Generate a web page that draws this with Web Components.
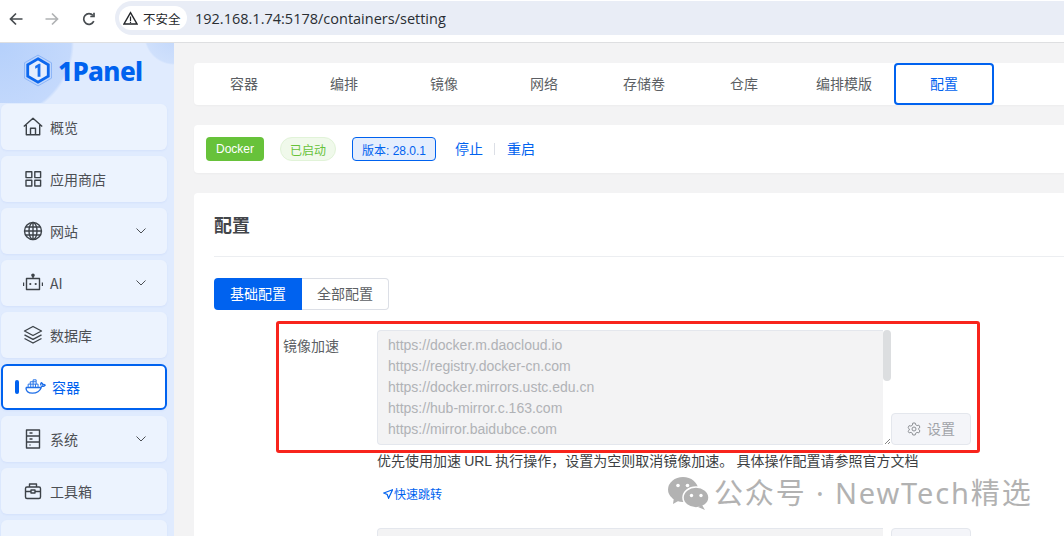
<!DOCTYPE html>
<html lang="zh-CN"><head><meta charset="utf-8"><title>1Panel</title>
<style>
html,body{margin:0;height:536px;overflow:hidden;background:#f3f3f4}
body{font:14px "Liberation Sans","Noto Sans CJK SC",sans-serif;position:relative;display:flex;flex-direction:column}
.layout{display:flex;flex:1;min-height:0}
</style></head><body>
<browser-bar url="192.168.1.74:5178/containers/setting"></browser-bar>
<div class="layout">
<app-sidebar>
  <nav-item label="概览"><svg viewBox="0 0 20 20"><path d="M.8 9.500 10 1.300l9.200 8.200M3.300 8v9.700h13.400V8M7.500 17.700v-6.500h5v6.500"/></svg></nav-item>
  <nav-item label="应用商店"><svg viewBox="0 0 20 20"><rect x="3" y="2.800" width="5.800" height="5.800"/><rect x="11.800" y="2.800" width="5.800" height="5.800"/><rect x="3" y="11.200" width="5.800" height="5.800"/><rect x="11.800" y="11.200" width="5.800" height="5.800"/></svg></nav-item>
  <nav-item label="网站" chevron><svg viewBox="0 0 20 20"><circle cx="10" cy="10" r="8.500"/><ellipse cx="10" cy="10" rx="4" ry="8.500"/><path d="M10 1.500v17M1.500 10h17M2.800 6h14.400M2.800 14h14.400"/></svg></nav-item>
  <nav-item label="AI" chevron><svg viewBox="0 0 20 20"><rect x="3.500" y="5.500" width="13" height="11"/><path d="M10 5.500V3M.5 9.500v3.500M19.500 9.500v3.500"/><circle cx="10" cy="2.300" r="1.100" fill="#3c4248"/><circle cx="7.300" cy="11" r="1.100" fill="#3c4248" stroke="none"/><circle cx="12.700" cy="11" r="1.100" fill="#3c4248" stroke="none"/></svg></nav-item>
  <nav-item label="数据库"><svg viewBox="0 0 20 20"><path d="M10 1.500 18.500 6 10 10.500 1.500 6zM1.500 9.800 10 14.300l8.500-4.500M1.500 13.500 10 18l8.500-4.500"/></svg></nav-item>
  <nav-item label="容器" active><svg viewBox="0 0 22 20" style="stroke:#1f6fe8"><path d="M1 10.500h15c1 0 1.700-.9 1.900-1.700.9.500 2.500.4 3.300-.7-.7-.8-1.800-1-2.600-.7-.2-1-.8-1.600-1.500-2-.7.900-.8 2-.3 2.800M1 10.500c0 3.800 2.700 6 6.800 6 4.500 0 7.800-2.300 9.300-6"/><path d="M3.300 10V7h10.400v3M5.500 7V4.500h6.200V7M8.500 4.500V2.500h3.200v2M8.500 7v3M11 7v3M6 7v3M8.500 4.500V7" stroke-width="1"/></svg></nav-item>
  <nav-item label="系统" chevron><svg viewBox="0 0 20 20"><rect x="3.500" y="1" width="13" height="18"/><path d="M3.500 7h13M3.500 13h13M6.500 4h3M6.500 10h3M6.500 16h1"/></svg></nav-item>
  <nav-item label="工具箱"><svg viewBox="0 0 20 20"><rect x="2.500" y="6" width="15" height="11.500" rx="1.500"/><path d="M6.500 6V3h7v3M2.500 10.500h15"/><rect x="8" y="9" width="4" height="3" fill="#ecf3fe"/></svg></nav-item>
  <nav-item></nav-item>
</app-sidebar>
<main-area>
  <tab-bar>
    <tab-item>容器</tab-item><tab-item>编排</tab-item><tab-item>镜像</tab-item><tab-item>网络</tab-item><tab-item>存储卷</tab-item><tab-item>仓库</tab-item><tab-item>编排模版</tab-item><tab-item active>配置</tab-item>
  </tab-bar>
  <status-card></status-card>
  <config-card>
    <mirror-field label="镜像加速">
      <div>https://docker.m.daocloud.io</div>
      <div>https://registry.docker-cn.com</div>
      <div>https://docker.mirrors.ustc.edu.cn</div>
      <div>https://hub-mirror.c.163.com</div>
      <div>https://mirror.baidubce.com</div>
    </mirror-field>
  </config-card>
</main-area>
</div>
<highlight-box></highlight-box>
<water-mark>公众号 · NewTech精选</water-mark>
<script>
function def(name, html){
  customElements.define(name, class extends HTMLElement{
    connectedCallback(){
      if(this.shadowRoot) return;
      const r=this.attachShadow({mode:'open'});
      r.innerHTML=typeof html==='function'?html(this):html;
    }
  });
}
def('browser-bar', el=>`<style>
:host{display:flex;align-items:center;height:42px;flex:none;background:#fff;border-bottom:1px solid #dedfe1}
.nav{display:flex;width:115px;flex:none;margin-top:-5px;align-items:center}
.nav svg{width:14px;height:14px;fill:none;stroke:#474c50;stroke-width:1.700;flex:none}
.pill{flex:1;height:34px;margin-top:-6px;background:#e9edf6;border-radius:17px 0 0 17px;display:flex;align-items:center;padding-left:4px}
.chip{display:flex;align-items:center;gap:5px;height:24px;width:68px;box-sizing:border-box;background:#fff;border-radius:12px;padding-left:4px;font-size:12.500px;color:#24272b;font-family:"Noto Sans CJK SC",sans-serif;white-space:nowrap}
.chip svg{width:15px;height:15px;flex:none}
.url{margin-left:8px;font:14.500px "Open Sans",sans-serif;color:#2a2e33;white-space:nowrap}
</style>
<div class="nav">
<svg viewBox="0 0 14 14" style="margin-left:9px"><path d="M13.500 7H1.500M7 1.500 1.500 7 7 12.500"/></svg>
<svg viewBox="0 0 14 14" style="margin-left:22px;stroke:#b0b2b4"><path d="M.5 7h12M7 1.500 12.500 7 7 12.500"/></svg>
<svg viewBox="0 0 14 14" style="margin-left:23px"><path d="M11.800 9.200A5.300 5.300 0 1 1 11 3.500"/><path d="M12 .8v3.700H8.300"/></svg>
</div>
<div class="pill"><span class="chip"><svg viewBox="0 0 15 15"><path d="M7.500 1.700 14 13H1z" fill="none" stroke="#24272b" stroke-width="1.400"/><path d="M7.500 5.500V10M7.500 10.700v1.300" stroke="#24272b" stroke-width="1.200"/></svg>不安全</span><span class="url">${el.getAttribute('url')}</span></div>`);

def('app-sidebar', `<style>
:host{display:flex;flex-direction:column;width:174px;flex:none;overflow:hidden;box-sizing:border-box;padding:0 7px 0 1px;
background:
 radial-gradient(circle 76px at -2px 0px,#b5d0fb 0,#c4d9fc 96%,transparent 100%) 0 0/100% 60px no-repeat,
 radial-gradient(circle 30px at 174px -8px,#c2d7fb 0,#cfe0fc 94%,transparent 100%) 0 0/100% 60px no-repeat,
 #e0ebfe}
.logo{display:flex;align-items:center;height:61px;box-sizing:border-box;padding:0 0 6px 23px;flex:none;gap:6px;font:800 26px "Noto Sans",sans-serif;color:#0062ef;letter-spacing:-.6px}
.logo svg{width:28px;height:33px;flex:none}
.list{display:flex;flex-direction:column;gap:6px}
</style><div class="logo"><svg viewBox="0 0 30 34"><path d="M15 .5 29.500 8.800v16.400L15 33.500.5 25.200V8.800z" fill="none" stroke="#7aa9f5" stroke-width=".8"/><path d="M15 4.500 26 10.800v12.400L15 29.500 4 23.200V10.800z" fill="#e6eefd" stroke="#0d68ee" stroke-width="3"/><path d="M12 12.300 16 9.800h1.600v14h-3V13.800l-2.600 1.300z" fill="#1a70ee"/></svg><span>1Panel</span></div><div class="list"><slot></slot></div>`);

def('nav-item', el=>{
 const active=el.hasAttribute('active'), label=el.getAttribute('label')||'', chev=el.hasAttribute('chevron');
 return `<style>
:host{display:flex;align-items:center;height:46px;flex:none;box-sizing:border-box;border-radius:6px;background:${active?'#fff':'#ecf3fe'};${active?'border:2px solid #0062ef;':''}padding-left:${active?'12px':'22px'};color:${active?'#0062ef':'#4c4f54'};font-family:"Noto Sans CJK SC",sans-serif;font-size:14px;box-shadow:0 1px 2px rgba(120,160,230,.12)}
.bar{width:3.500px;height:14px;border-radius:2px;background:#0062ef;margin-right:6.500px;flex:none}
.ico{width:${active?'21px':'20px'};height:20px;flex:none;margin-right:${active?'6px':'7px'};display:flex}
::slotted(svg){width:100%;height:100%;fill:none;stroke:#3c4248;stroke-width:1.400;stroke-linejoin:round}
.t{flex:1}
.ch{width:10px;height:6px;margin-right:21px;fill:none;stroke:#4c4f54;stroke-width:1}
</style>${active?'<span class="bar"></span>':''}<span class="ico"><slot></slot></span><span class="t">${label}</span>${chev?'<svg class="ch" viewBox="0 0 10 6"><path d="M.5.5 5 5 9.500.5"/></svg>':''}`;
});

def('main-area', `<style>
:host{display:flex;flex-direction:column;flex:1;min-width:0;padding:20px 0 0 20px;gap:20px;overflow:hidden}
</style><slot></slot>`);

def('tab-bar', `<style>:host{display:flex;height:42px;flex:none;background:#fff;border-radius:4px 0 0 4px;box-shadow:0 1px 2px rgba(0,0,0,.03)}</style><slot></slot>`);
def('tab-item', el=>{const a=el.hasAttribute('active');return `<style>
:host{display:flex;align-items:center;justify-content:center;width:100px;height:42px;box-sizing:border-box;border-radius:4px;font-size:14px;line-height:20px;padding-bottom:3px;font-family:"Noto Sans CJK SC",sans-serif;color:${a?'#0062ef':'#5c5f64'};${a?'border:2px solid #0062ef;':''}}
</style><slot></slot>`});

def('status-card', `<style>
:host{display:flex;align-items:center;height:48px;flex:none;box-sizing:border-box;background:#fff;border-radius:4px 0 0 4px;padding-left:12px;box-shadow:0 1px 2px rgba(0,0,0,.03)}
.tag{display:inline-flex;align-items:center;justify-content:center;height:24px;box-sizing:border-box;font-size:12px;flex:none}
.d{width:58px;background:#67c23a;color:#fff;border-radius:4px;margin-right:16px}
.s{width:56px;background:#f0f9eb;border:1px solid #e1f3d8;color:#67c23a;border-radius:12px;margin-right:16px}
.v{width:84px;background:#e5eefd;border:1px solid #0062ef;color:#0062ef;border-radius:4px;margin-right:19px}
a{color:#0062ef;font:14px/20px "Noto Sans CJK SC",sans-serif;padding-bottom:3px}
i{width:1px;height:12px;background:#dcdfe6;margin:0 12px 0 11px}
</style><span class="tag d">Docker</span><span class="tag s">已启动</span><span class="tag v">版本: 28.0.1</span><a>停止</a><i></i><a>重启</a>`);

def('config-card', `<style>
:host{display:block;flex:none;background:#fff;border-radius:4px 0 0 0;padding:0 0 0 20px;height:400px}
h2{margin:0;height:64px;box-sizing:border-box;border-bottom:1px solid #eceef1;padding-bottom:2px;display:flex;align-items:center;font:700 18px "Noto Sans CJK SC",sans-serif;color:#43464a}
.seg{display:flex;margin:21px 0 20px;height:32px;width:175px;font:14px "Noto Sans CJK SC",sans-serif}
.seg span{display:flex;align-items:center;justify-content:center;box-sizing:border-box;padding-bottom:2px}
.on{width:88px;background:#0062ef;color:#fff;border-radius:4px 0 0 4px}
.off{width:87px;border:1px solid #dcdfe6;border-left:0;color:#5c5f64;border-radius:0 4px 4px 0}
</style><h2>配置</h2><div class="seg"><span class="on">基础配置</span><span class="off">全部配置</span></div><slot></slot>`);

def('mirror-field', el=>`<style>
:host{display:grid;grid-template-columns:94px 594px;padding-left:69px}
.lbl{font:14px/30px "Noto Sans CJK SC",sans-serif;color:#5c5f64}
.ctl{display:flex;align-items:flex-end;width:594px}
.ta{width:506px;height:115px;box-sizing:border-box;background:#f3f3f4;border:1px solid #e4e7ed;border-right:0;border-radius:4px 0 0 4px;padding:4px 10px;line-height:21px;color:#b0b2b6;font-size:14px;flex:none;overflow:hidden}
.ta.short{height:30px}
.gut{width:8px;height:115px;flex:none;display:flex;flex-direction:column;justify-content:space-between;align-self:flex-start}
.sb{width:8px;height:51px;background:#dcdee0;border-radius:4px}
.grip{display:block;width:8px;height:8px}
.btn{display:flex;align-items:center;justify-content:center;gap:6px;width:80px;height:32px;padding-bottom:2px;box-sizing:border-box;background:#f4f5f9;border:1px solid #e4e7ed;border-radius:4px;color:#a0a3a8;font:14px "Noto Sans CJK SC",sans-serif;flex:none}
.btn svg{width:14px;height:14px;fill:none;stroke:#8d9095;stroke-width:1;margin-top:2px}
.help{grid-column:2;font:14px/20px "Noto Sans CJK SC",sans-serif;color:#3d3f43;white-space:nowrap;margin-top:5px}
.help span{font-family:"Liberation Sans"}
.jump{grid-column:2;display:flex;align-items:center;gap:1px;margin:13px 0 0 6px;color:#0062ef;font:12px/20px "Noto Sans CJK SC",sans-serif;height:20px}
.jump svg{width:10px;height:10px;fill:none;stroke:#0062ef;stroke-width:1.200}
.next{grid-column:2;margin-top:24px;height:30px;align-items:flex-start}
.next .gut{height:30px}
.next .btn{height:30px}
</style><div class="lbl">${el.getAttribute('label')}</div>
<div class="ctl"><div class="ta"><slot></slot></div><div class="gut"><span class="sb"></span><svg class="grip" viewBox="0 0 8 8"><path d="M2 7 7 2M5 7 7 5" stroke="#666" stroke-width=".8"/></svg></div><div class="btn"><svg viewBox="0 0 14 14"><circle cx="7" cy="7" r="2"/><path d="M5.800 1h2.400l.4 1.700 1.500.9 1.700-.5 1.200 2.100-1.300 1.200v1.200l1.300 1.200-1.200 2.100-1.700-.5-1.500.9-.4 1.700H5.800l-.4-1.700-1.500-.9-1.700.5L1 9.300l1.300-1.200V6.900L1 5.700l1.200-2.100 1.700.5 1.500-.9z"/></svg>设置</div></div>
<div class="help">优先使用加速 <span>URL</span> 执行操作，设置为空则取消镜像加速。 具体操作配置请参照官方文档</div>
<div class="jump"><svg viewBox="0 0 10 10"><path d="M9.500.8.800 4l3.400 1.500L5.600 9.200z"/></svg>快速跳转</div>
<div class="next ctl"><div class="ta short"></div><div class="gut"></div><div class="btn"></div></div>`);

def('highlight-box', `<style>:host{position:absolute;left:276px;top:321px;width:704px;height:132px;box-sizing:border-box;border:3px solid #f8241c;border-radius:3px;pointer-events:none}</style>`);
def('water-mark', `<style>
:host{position:absolute;left:668px;top:474px;display:flex;align-items:center;gap:5px;color:#b2b2b2;font:29px/38px "Noto Sans","Noto Sans CJK SC",sans-serif;letter-spacing:1.850px;white-space:nowrap}
svg{width:41px;height:33px;flex:none}
</style><svg viewBox="0 0 41 33"><ellipse cx="15" cy="12.500" rx="15" ry="12.500" fill="#b2b2b2"/><path d="M6 20 5 27l7-4z" fill="#b2b2b2"/><ellipse cx="28" cy="20.500" rx="13" ry="10.500" fill="#b2b2b2" stroke="#fff" stroke-width="1.500"/><path d="M34 28l3 5-7-3z" fill="#b2b2b2"/><circle cx="10" cy="8.500" r="1.800" fill="#fff"/><circle cx="19.500" cy="8.500" r="1.800" fill="#fff"/><circle cx="23.500" cy="18.500" r="1.700" fill="#fff"/><circle cx="33" cy="18.500" r="1.700" fill="#fff"/></svg><slot></slot>`);
</script>
</body></html>
